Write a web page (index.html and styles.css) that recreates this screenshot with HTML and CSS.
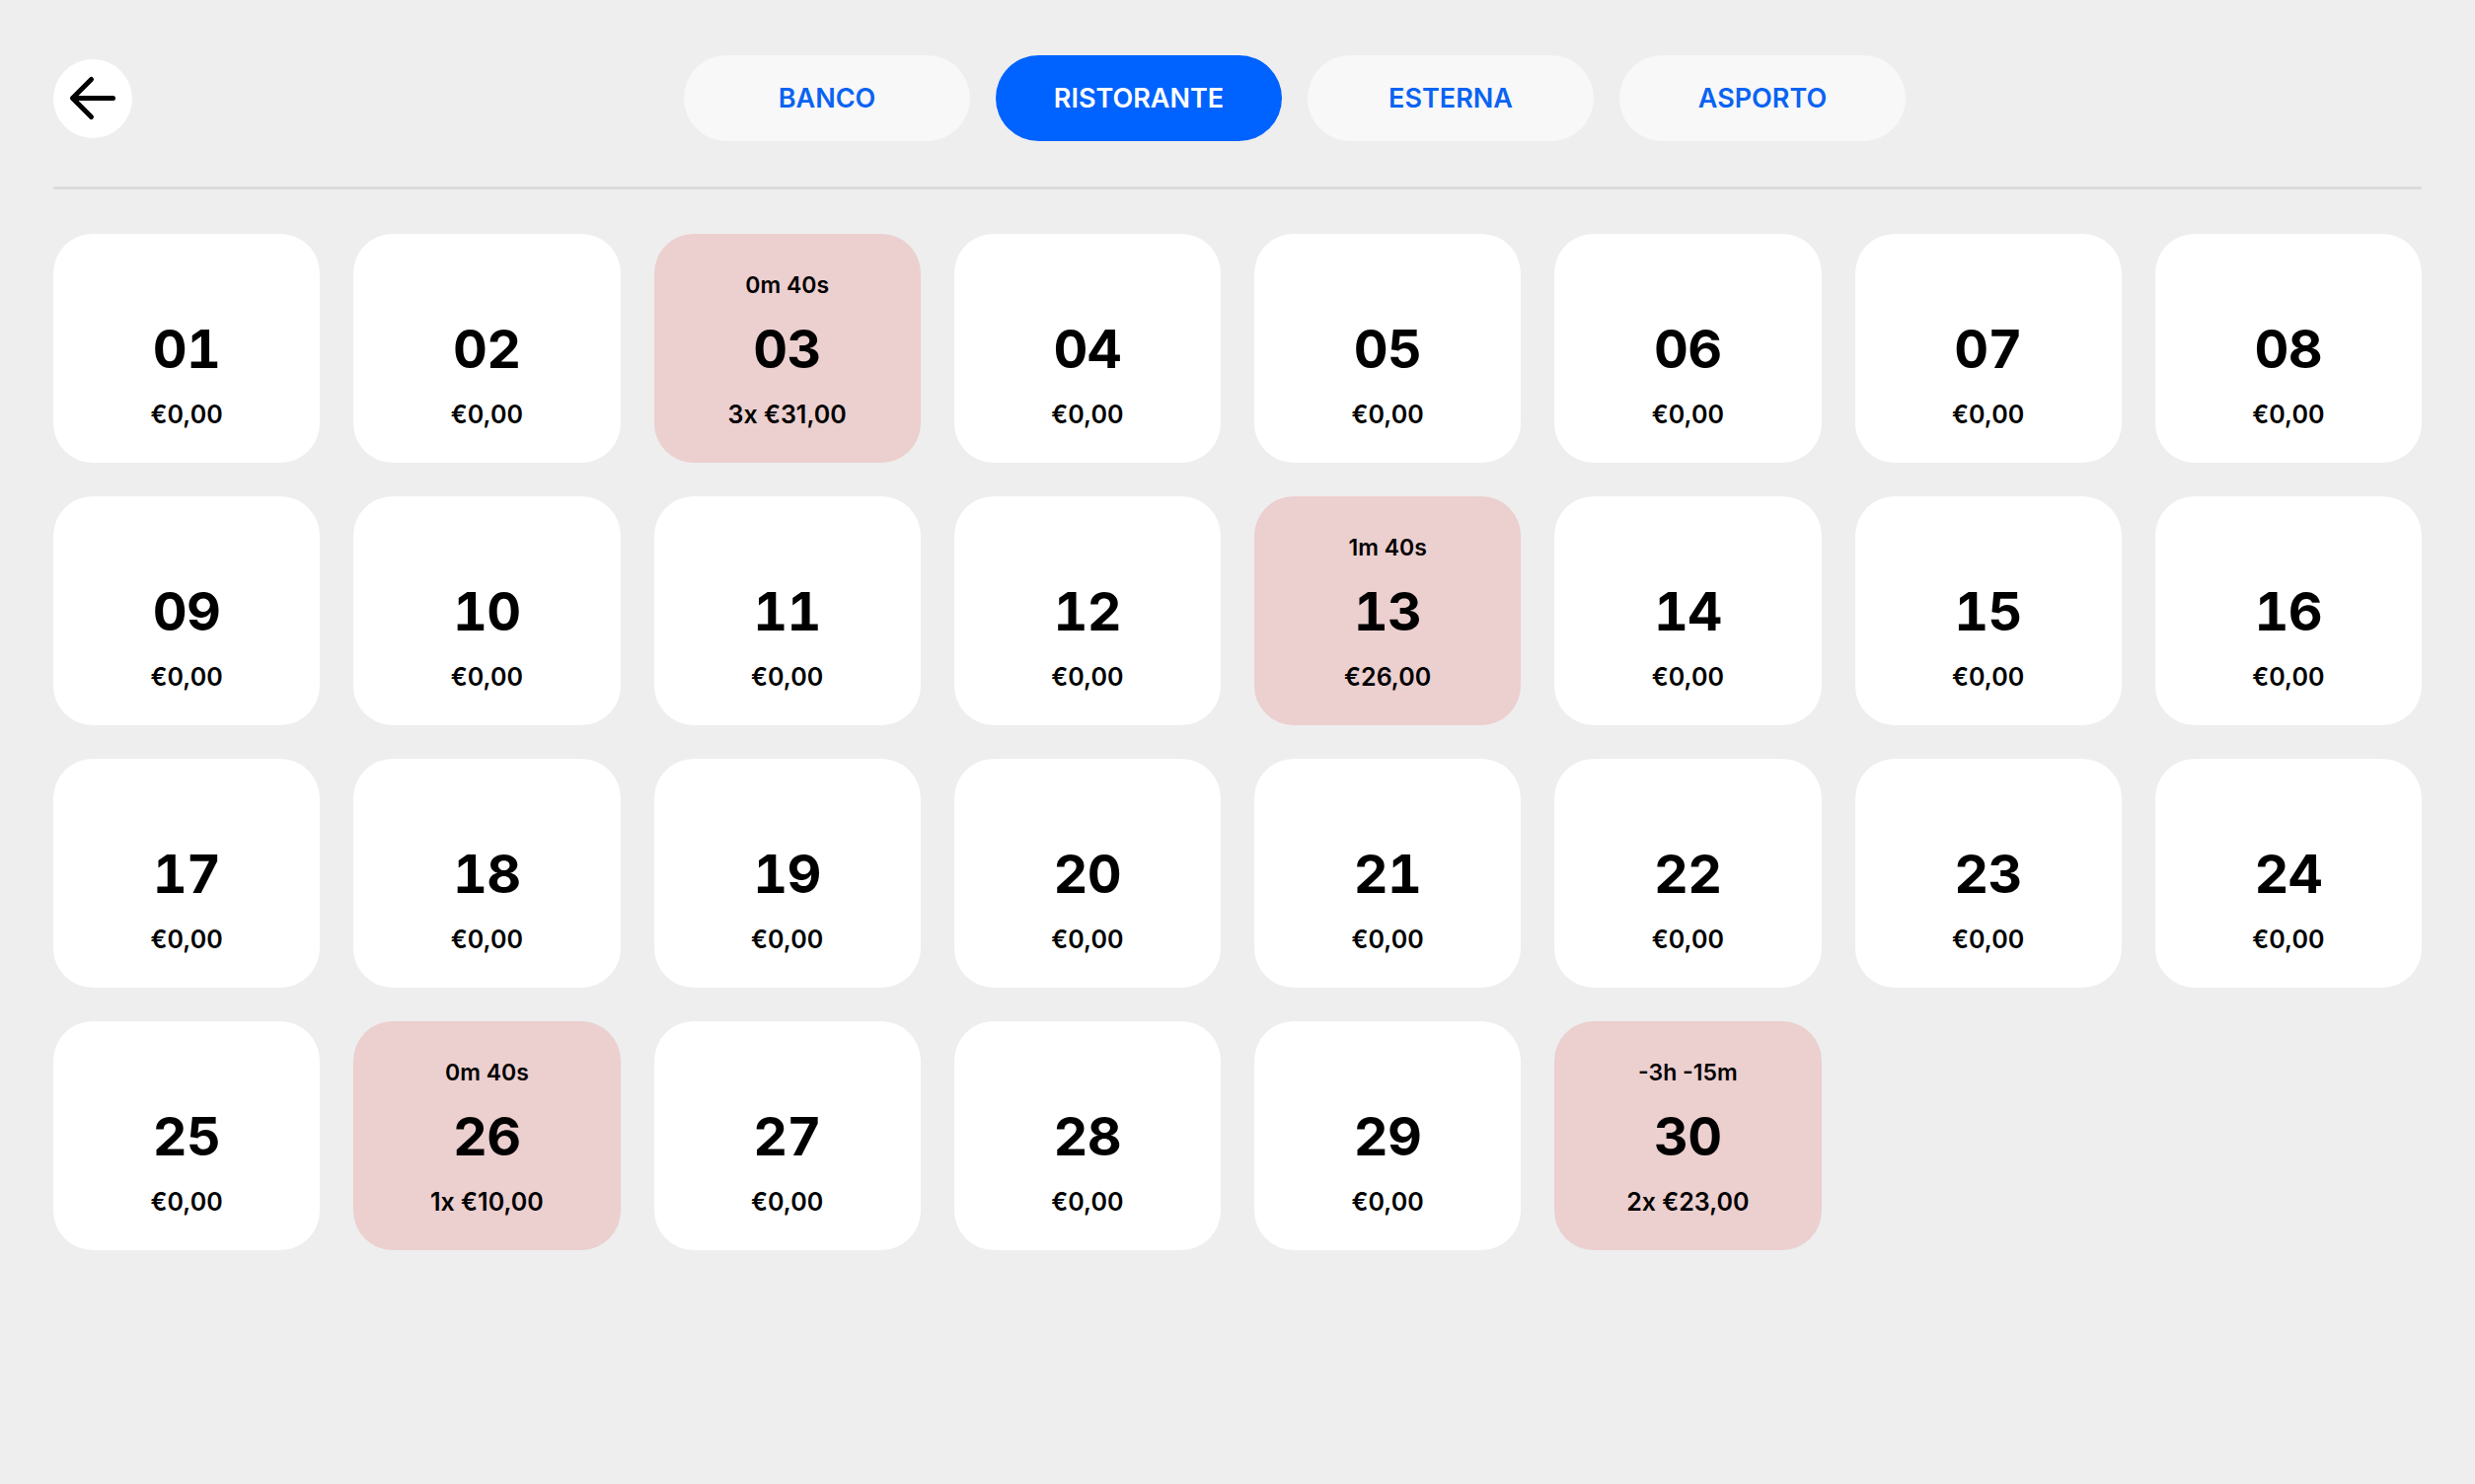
FILE: index.html
```html
<!DOCTYPE html>
<html lang="it">
<head>
<meta charset="utf-8">
<title>Tavoli</title>
<link rel="stylesheet" href="styles.css">
</head>
<body>
<div class="page">
  <header class="header">
    <button class="back" aria-label="Indietro">
      <svg width="80" height="80" viewBox="0 0 80 80" fill="none" stroke="#000" stroke-width="5" stroke-linecap="round" stroke-linejoin="round">
        <path d="M60.5 39.5H20"/>
        <path d="M38.5 20.5L19.5 39.5L38.5 58.5"/>
      </svg>
    </button>
    <nav class="tabs">
      <a class="tab">BANCO</a>
      <a class="tab tab-active">RISTORANTE</a>
      <a class="tab">ESTERNA</a>
      <a class="tab">ASPORTO</a>
    </nav>
  </header>
  <div class="divider"></div>
  <main class="grid">
    <div class="card"><div class="time"></div><div class="num">01</div><div class="price">€0,00</div></div>
    <div class="card"><div class="time"></div><div class="num">02</div><div class="price">€0,00</div></div>
    <div class="card busy"><div class="time">0m 40s</div><div class="num">03</div><div class="price">3x €31,00</div></div>
    <div class="card"><div class="time"></div><div class="num">04</div><div class="price">€0,00</div></div>
    <div class="card"><div class="time"></div><div class="num">05</div><div class="price">€0,00</div></div>
    <div class="card"><div class="time"></div><div class="num">06</div><div class="price">€0,00</div></div>
    <div class="card"><div class="time"></div><div class="num">07</div><div class="price">€0,00</div></div>
    <div class="card"><div class="time"></div><div class="num">08</div><div class="price">€0,00</div></div>

    <div class="card"><div class="time"></div><div class="num">09</div><div class="price">€0,00</div></div>
    <div class="card"><div class="time"></div><div class="num">10</div><div class="price">€0,00</div></div>
    <div class="card"><div class="time"></div><div class="num">11</div><div class="price">€0,00</div></div>
    <div class="card"><div class="time"></div><div class="num">12</div><div class="price">€0,00</div></div>
    <div class="card busy"><div class="time">1m 40s</div><div class="num">13</div><div class="price">€26,00</div></div>
    <div class="card"><div class="time"></div><div class="num">14</div><div class="price">€0,00</div></div>
    <div class="card"><div class="time"></div><div class="num">15</div><div class="price">€0,00</div></div>
    <div class="card"><div class="time"></div><div class="num">16</div><div class="price">€0,00</div></div>

    <div class="card"><div class="time"></div><div class="num">17</div><div class="price">€0,00</div></div>
    <div class="card"><div class="time"></div><div class="num">18</div><div class="price">€0,00</div></div>
    <div class="card"><div class="time"></div><div class="num">19</div><div class="price">€0,00</div></div>
    <div class="card"><div class="time"></div><div class="num">20</div><div class="price">€0,00</div></div>
    <div class="card"><div class="time"></div><div class="num">21</div><div class="price">€0,00</div></div>
    <div class="card"><div class="time"></div><div class="num">22</div><div class="price">€0,00</div></div>
    <div class="card"><div class="time"></div><div class="num">23</div><div class="price">€0,00</div></div>
    <div class="card"><div class="time"></div><div class="num">24</div><div class="price">€0,00</div></div>

    <div class="card"><div class="time"></div><div class="num">25</div><div class="price">€0,00</div></div>
    <div class="card busy"><div class="time">0m 40s</div><div class="num">26</div><div class="price">1x €10,00</div></div>
    <div class="card"><div class="time"></div><div class="num">27</div><div class="price">€0,00</div></div>
    <div class="card"><div class="time"></div><div class="num">28</div><div class="price">€0,00</div></div>
    <div class="card"><div class="time"></div><div class="num">29</div><div class="price">€0,00</div></div>
    <div class="card busy"><div class="time">-3h -15m</div><div class="num">30</div><div class="price">2x €23,00</div></div>
  </main>
</div>
</body>
</html>
```

FILE: styles.css
```css
* {
  box-sizing: border-box;
}

html, body {
  margin: 0;
  padding: 0;
  background: #eeeeee;
}

body {
  font-family: "Inter", "Noto Sans", sans-serif;
  color: #000;
  width: 2508px;
  height: 1504px;
  overflow: hidden;
}

.page {
  padding: 56px 54px 0 54px;
}

.header {
  display: flex;
  align-items: center;
  height: 87px;
}

.back {
  width: 80px;
  height: 80px;
  border-radius: 50%;
  background: #ffffff;
  border: none;
  padding: 0;
  margin: 0;
  display: flex;
  align-items: center;
  justify-content: center;
  flex: none;
}

.back svg {
  display: block;
}

.tabs {
  display: flex;
  gap: 26px;
  margin-left: 559px;
}

.tab {
  width: 290px;
  height: 87px;
  border-radius: 44px;
  background: #f8f8f8;
  color: #0a63f2;
  font-size: 27px;
  font-weight: 600;
  display: flex;
  align-items: center;
  justify-content: center;
}

.tab-active {
  background: #0062ff;
  color: #ffffff;
}

.divider {
  margin-top: 46px;
  height: 3px;
  background: #dcdcdc;
}

.grid {
  margin-top: 45px;
  display: grid;
  grid-template-columns: repeat(8, 1fr);
  grid-auto-rows: 232px;
  gap: 34px;
}

.card {
  background: #ffffff;
  border-radius: 40px;
  display: flex;
  flex-direction: column;
  align-items: center;
  padding-top: 41px;
}

.busy {
  background: #eccfcf;
}

.time {
  height: 23px;
  font-size: 23px;
  line-height: 23px;
  font-weight: 600;
  white-space: nowrap;
}

.num {
  margin-top: 26px;
  height: 54px;
  font-size: 54px;
  line-height: 54px;
  font-weight: 700;
  font-variant-numeric: tabular-nums;
  letter-spacing: -0.5px;
}

.price {
  margin-top: 27px;
  height: 25px;
  font-size: 25px;
  line-height: 25px;
  font-weight: 600;
  white-space: nowrap;
}
```
